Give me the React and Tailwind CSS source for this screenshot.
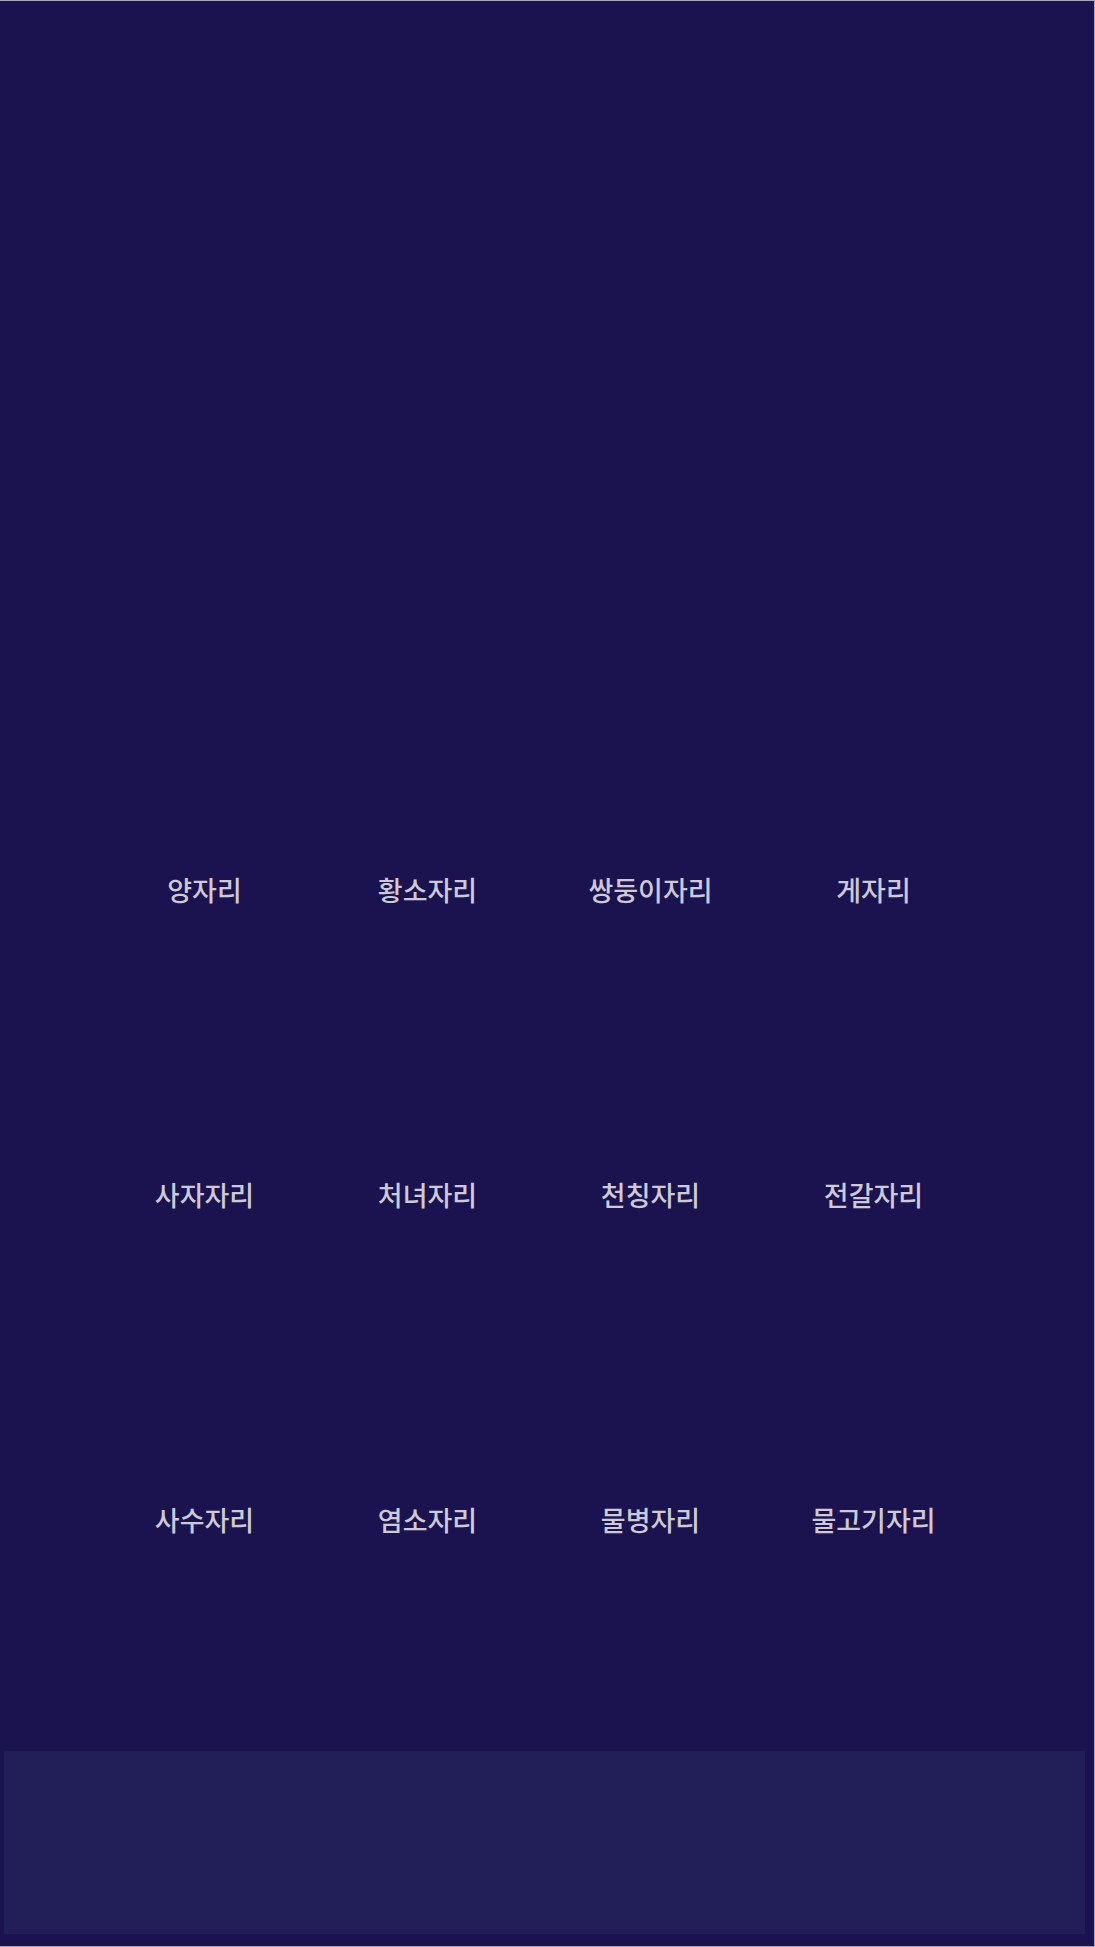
import React from "react";

const rows = [
  ["양자리", "황소자리", "쌍둥이자리", "게자리"],
  ["사자자리", "처녀자리", "천칭자리", "전갈자리"],
  ["사수자리", "염소자리", "물병자리", "물고기자리"],
];

const rowHeights = ["h-[305px]", "h-[325px]", "h-[36px]"];

export default function App() {
  return (
    <div
      className="h-[1947px] w-[1095px] bg-[#1b1350] border-t border-r border-b border-[#a9a6b8] flex flex-col"
      style={{ fontFamily: '"Noto Sans CJK KR", "Noto Sans", sans-serif' }}
    >
      <div className="h-[871px] shrink-0"></div>
      {rows.map((row, i) => (
        <div key={i} className={`${rowHeights[i]} shrink-0 ml-[93px] w-[892px] grid grid-cols-4`}>
          {row.map((name) => (
            <div key={name} className="h-[36px] flex items-center justify-center text-[27px] font-medium leading-[36px] text-[#cdcad4] whitespace-nowrap">
              {name}
            </div>
          ))}
        </div>
      ))}
      <div className="h-[213px] shrink-0"></div>
      <div className="ml-[4px] w-[1081px] h-[183px] shrink-0 bg-[#221f58]"></div>
    </div>
  );
}
